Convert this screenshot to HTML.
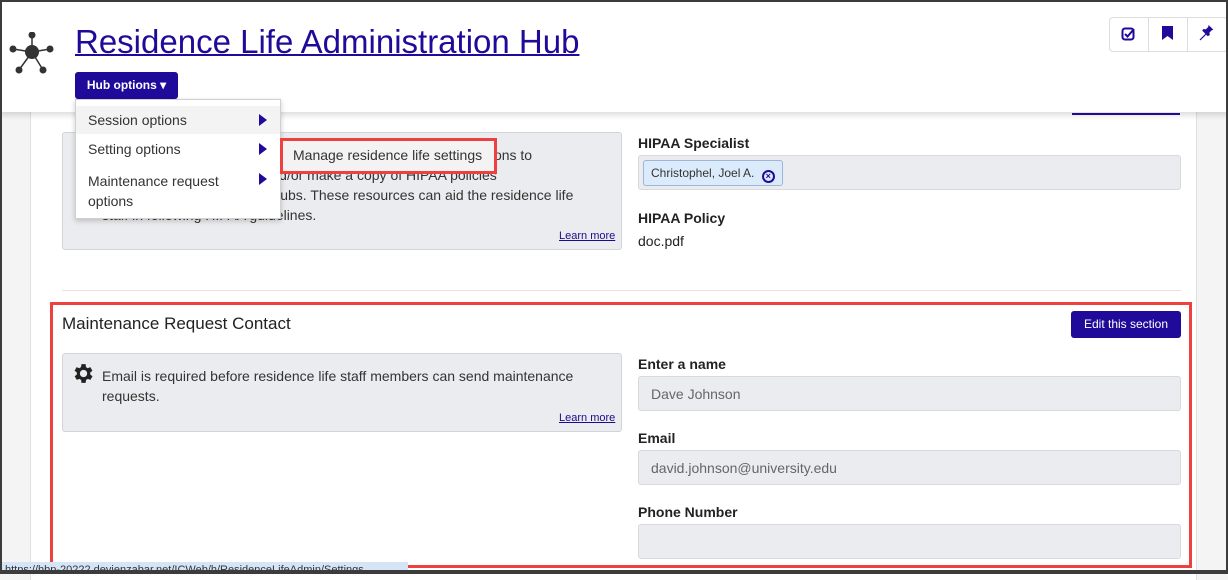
<!DOCTYPE html>
<html><head><style>
*{box-sizing:border-box;margin:0;padding:0}
body{width:1228px;height:574px;overflow:hidden;position:relative;font-family:"Liberation Sans",sans-serif;background:#f4f4f4;color:#222}
.abs{position:absolute}
.win{position:absolute;left:0;top:0;width:1228px;height:574px;border:2px solid #3c3c3c;border-bottom-width:4px;pointer-events:none;z-index:50}
.card{left:30px;top:100px;width:1167px;height:480px;background:#fff;border-left:1px solid #e0e0e0;border-right:1px solid #e0e0e0}
.header{left:0;top:0;width:1228px;height:112px;background:#fff;box-shadow:0 3px 6px rgba(0,0,0,.15);z-index:5}
.panel{background:#ebecef;border:1px solid #d3d4d8;border-radius:3px}
.lbl{font-weight:bold;font-size:14px;color:#222}
.inp{background:#ebecef;border:1px solid #d8d9dc;border-radius:3px;height:35px;font-size:14px;color:#666;padding:9px 12px}
.lm{font-size:11px;color:#1c0b8c;text-decoration:underline}
.btn{background:#1f0a99;color:#fff;border-radius:3px;font-size:12px}
</style></head><body>
<div class="abs card"></div>
<div class="abs" style="left:1072px;top:113px;width:108px;height:2px;background:#1f0a99;z-index:6"></div>
<div class="abs panel" style="left:62px;top:132px;width:560px;height:118px"></div>
<div class="abs" style="left:102px;top:145px;width:515px;font-size:14px;line-height:20px;color:#333;white-space:nowrap">Health Insurance Portability and Accountability Act (HIPAA) options to<br>assign a HIPAA specialist and/or make a copy of HIPAA policies<br>available in Residence Life hubs. These resources can aid the residence life<br>staff in following HIPAA guidelines.</div>
<div class="abs lm" style="left:559px;top:230px">Learn more</div>
<div class="abs lbl" style="left:638px;top:135px">HIPAA Specialist</div>
<div class="abs inp" style="left:638px;top:155px;width:543px;height:35px;padding:4px"><span style="display:inline-block;background:#dcebfb;border:1px solid #9bb6d6;border-radius:3px;height:26px;padding:5px 7px;font-size:12px;color:#333">Christophel, Joel A. <span style="display:inline-block;width:13px;height:13px;border:2px solid #1f0a99;border-radius:50%;font-size:9px;line-height:9px;text-align:center;color:#1f0a99;font-weight:bold;vertical-align:-2px;margin-left:4px">×</span></span></div>
<div class="abs lbl" style="left:638px;top:210px">HIPAA Policy</div>
<div class="abs" style="left:638px;top:233px;font-size:14px;color:#222">doc.pdf</div>
<div class="abs" style="left:62px;top:290px;width:1119px;height:1px;background:#e3e3e3"></div>
<div class="abs" style="left:62px;top:314px;font-size:17px;color:#222">Maintenance Request Contact</div>
<div class="abs btn" style="left:1071px;top:311px;width:110px;height:27px;line-height:27px;text-align:center">Edit this section</div>
<div class="abs panel" style="left:62px;top:353px;width:560px;height:79px"></div>
<svg class="abs" style="left:70px;top:361px" width="25" height="25" viewBox="0 0 24 24"><path fill="#222" d="M19.4 13a7.5 7.5 0 000-2l2.1-1.6-2-3.5-2.5 1a7.7 7.7 0 00-1.7-1L15 3h-4l-.4 2.9a7.7 7.7 0 00-1.7 1l-2.5-1-2 3.5L6.6 11a7.5 7.5 0 000 2l-2.1 1.6 2 3.5 2.5-1a7.7 7.7 0 001.7 1L11 21h4l.4-2.9a7.7 7.7 0 001.7-1l2.5 1 2-3.5zM13 15.5A3.5 3.5 0 1113 8.5a3.5 3.5 0 010 7z"/></svg>
<div class="abs" style="left:102px;top:366px;width:500px;font-size:14px;line-height:20px;color:#333">Email is required before residence life staff members can send maintenance requests.</div>
<div class="abs lm" style="left:559px;top:412px">Learn more</div>
<div class="abs lbl" style="left:638px;top:356px">Enter a name</div>
<div class="abs inp" style="left:638px;top:376px;width:543px">Dave Johnson</div>
<div class="abs lbl" style="left:638px;top:430px">Email</div>
<div class="abs inp" style="left:638px;top:450px;width:543px">david.johnson@university.edu</div>
<div class="abs lbl" style="left:638px;top:504px">Phone Number</div>
<div class="abs inp" style="left:638px;top:524px;width:543px"></div>
<div class="abs" style="left:50px;top:302px;width:1142px;height:266px;border:3px solid #ef4040;z-index:8"></div>
<div class="abs header">
<svg class="abs" style="left:8px;top:32px" width="48" height="46" viewBox="0 0 48 46"><g stroke="#333" stroke-width="1.5"><line x1="24" y1="20" x2="24" y2="3"/><line x1="24" y1="20" x2="5" y2="17"/><line x1="24" y1="20" x2="42" y2="17"/><line x1="24" y1="20" x2="11" y2="38"/><line x1="24" y1="20" x2="35" y2="38"/></g><g fill="#333"><circle cx="24" cy="20" r="7"/><circle cx="24" cy="3" r="3.5"/><circle cx="5" cy="17" r="3.5"/><circle cx="42" cy="17" r="3.5"/><circle cx="11" cy="38" r="3.5"/><circle cx="35" cy="38" r="3.5"/></g></svg>
<div class="abs" style="left:75px;top:23px;font-size:33px;color:#1f0a99;text-decoration:underline;text-decoration-thickness:2px;white-space:nowrap">Residence Life Administration Hub</div>
<div class="abs btn" style="left:75px;top:72px;width:103px;height:27px;line-height:27px;text-align:center;font-size:12px;font-weight:bold">Hub options &#9662;</div>
<div class="abs" style="left:1109px;top:17px;width:119px;height:35px;border:1px solid #ddd;border-radius:4px;background:#fff"></div>
<div class="abs" style="left:1148px;top:17px;width:1px;height:35px;background:#ddd"></div>
<div class="abs" style="left:1187px;top:17px;width:1px;height:35px;background:#ddd"></div>
<svg class="abs" style="left:1121px;top:27px" width="14" height="14" viewBox="0 0 14 14"><rect x="1.5" y="1.5" width="11" height="11" rx="2.5" fill="none" stroke="#1f0a99" stroke-width="2"/><path d="M4 7l2.5 2.5L13 2" fill="none" stroke="#1f0a99" stroke-width="2"/></svg>
<svg class="abs" style="left:1162px;top:26px" width="11" height="14" viewBox="0 0 11 14"><path d="M0 0h11v14L5.5 10 0 14z" fill="#1f0a99"/></svg>
<svg class="abs" style="left:1199px;top:25px" width="16" height="16" viewBox="0 0 16 16"><path d="M9 1l6 6-2 .5-3 3 .5 3L8 15 1 8l1.5-2 3 .5 3-3z" fill="#1f0a99" transform="scale(.8) translate(3 -1)"/><line x1="1" y1="15" x2="7" y2="9" stroke="#1f0a99" stroke-width="1.2"/></svg>
</div>
<div class="abs" style="left:75px;top:99px;width:206px;height:120px;background:#fff;border:1px solid #d0d0d0;box-shadow:0 2px 5px rgba(0,0,0,.2);z-index:10;font-size:14px;color:#333">
<div style="position:absolute;left:0;top:6px;width:204px;height:28px;background:#f3f3f3"></div>
<div style="position:absolute;left:12px;top:12px">Session options</div>
<div style="position:absolute;left:12px;top:41px">Setting options</div>
<div style="position:absolute;left:12px;top:71px;line-height:20px">Maintenance request<br>options</div>
<svg style="position:absolute;left:183px;top:14px" width="8" height="12"><path d="M0 0l8 6-8 6z" fill="#1f0a99"/></svg>
<svg style="position:absolute;left:183px;top:43px" width="8" height="12"><path d="M0 0l8 6-8 6z" fill="#1f0a99"/></svg>
<svg style="position:absolute;left:183px;top:73px" width="8" height="12"><path d="M0 0l8 6-8 6z" fill="#1f0a99"/></svg>
</div>
<div class="abs" style="left:280px;top:138px;width:217px;height:36px;border:3px solid #ef4040;background:#f3f3f3;z-index:11;font-size:14px;color:#333;padding:6px 0 0 10px">Manage residence life settings</div>
<div class="abs" style="left:0;top:562px;width:408px;height:12px;background:#d6e4f7;font-size:11px;color:#333;overflow:hidden;padding-left:5px;line-height:16px;z-index:20">https://hbp-20222.devjenzabar.net/ICWeb/h/ResidenceLifeAdmin/Settings</div>
<div class="win"></div>
</body></html>
